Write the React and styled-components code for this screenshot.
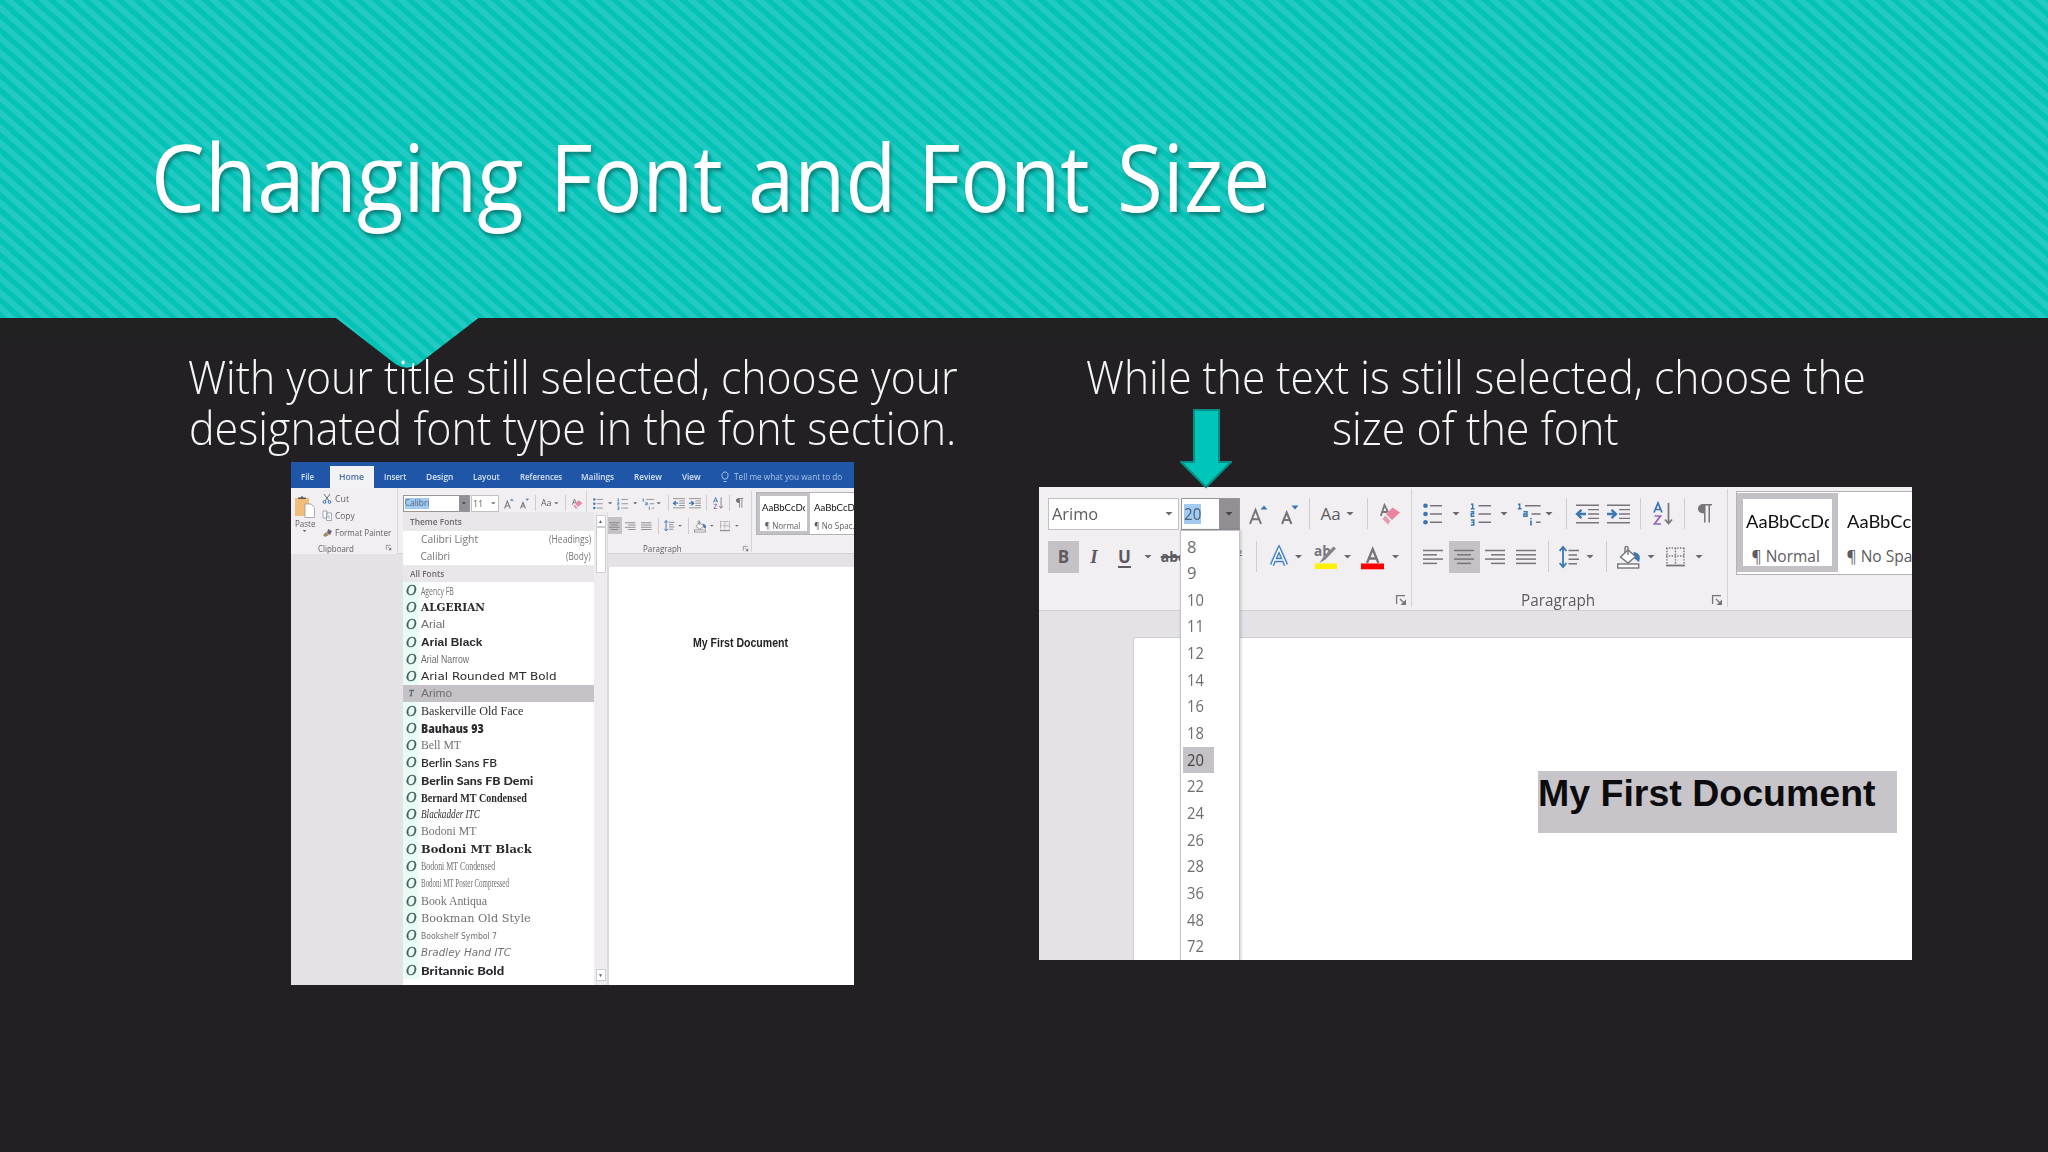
import React, { useLayoutEffect, useRef, useState } from "react";
import styled, { createGlobalStyle, css } from "styled-components";

const GlobalStyle = createGlobalStyle`
  body {
    margin: 0;
    background: #222023;
    font-family: "Open Sans", "Noto Sans", sans-serif;
  }
  * {
    box-sizing: border-box;
  }
`;

const Slide = styled.div`
  position: relative;
  display: flex;
  flex-direction: column;
  width: 2048px;
  height: 1152px;
  overflow: hidden;
  background: linear-gradient(#212221 318px, #222023 350px);
`;

const Banner = styled.header`
  position: relative;
  height: 318px;
  padding: 106px 0 0 150.5px;
`;

const BannerArt = styled.svg`
  position: absolute;
  top: 0;
  left: 0;
`;

const Title = styled.h1`
  position: relative;
  display: flex;
  margin: 0;
  font-size: 94px;
  font-weight: 400;
  line-height: 140px;
  color: #fff;
  text-shadow: 2px 3px 4px rgba(0, 60, 60, 0.5);
`;

const Word = styled.span`
  display: flex;
  margin-right: ${(p) => p.$gap || 0}px;
`;

const Columns = styled.main`
  position: relative;
  display: flex;
  align-items: flex-start;
  padding-left: 291px;
`;

const Column = styled.section`
  display: flex;
  flex-direction: column;
  align-items: center;
  width: ${(p) => p.$w}px;
  margin-right: ${(p) => p.$mr || 0}px;
`;

const Caption = styled.div`
  display: flex;
  flex-direction: column;
  align-items: center;
  height: ${(p) => p.$h}px;
  padding-top: 33px;
  font-size: 45.5px;
  font-weight: 300;
  line-height: 51.3px;
  color: #f6f6f6;
`;

const Shot = styled.div`
  position: relative;
  display: flex;
  flex-direction: column;
  width: 100%;
  height: ${(p) => p.$h}px;
  overflow: hidden;
  background: #e4e2e6;
  filter: ${(p) => (p.$soft ? "blur(0.45px)" : "none")};
`;

const FitBox = styled.span`
  display: inline-block;
  flex: none;
  width: ${(p) => p.$w}px;
  white-space: nowrap;
  text-align: left;
`;

const FitInner = styled.span`
  display: inline-block;
  transform-origin: 0 50%;
`;

// stretches or squeezes a line of text to a fixed width
const Fit = ({ w, children }) => {
  const ref = useRef(null);
  const [scale, setScale] = useState(1);

  useLayoutEffect(() => {
    setScale(w / ref.current.offsetWidth);
  }, [w]);

  return (
    <FitBox $w={w}>
      <FitInner ref={ref} style={{ transform: `scaleX(${scale})` }}>
        {children}
      </FitInner>
    </FitBox>
  );
};

/* ---------- ribbon ---------- */

const RibbonBar = styled.div`
  display: flex;
  flex: none;
  height: 124px;
  background: #f1eff2;
  border-bottom: 1.5px solid #d2d0d4;
  color: #5d5b5f;
  font-size: 16px;
`;

const Zoomed = styled.div`
  zoom: 0.522;
  padding-top: ${(p) => p.$pt || 0}px;
`;

const Group = styled.div`
  position: relative;
  flex: none;
  width: ${(p) => p.$w}px;
  height: 118px;
  margin-top: 2px;
  border-right: 1.5px solid #d4d2d6;
`;

const ToolRow = styled.div`
  display: flex;
  align-items: center;
  height: 32px;
  margin-top: ${(p) => p.$mt}px;
`;

const Icon = styled.svg`
  flex: none;
  overflow: visible;
  margin-left: ${(p) => p.$ml || 0}px;
`;

const Rule = styled.i`
  flex: none;
  width: 1px;
  height: 31px;
  margin-left: ${(p) => p.$ml}px;
  background: #cfcdd1;
`;

const Caret = styled.i`
  flex: none;
  width: 8px;
  height: 4px;
  margin-left: ${(p) => p.$ml || 0}px;
  background: ${(p) => p.$color || "#6a686c"};
  clip-path: polygon(0 0, 100% 0, 50% 100%);
`;

const Combo = styled.div`
  display: flex;
  align-items: center;
  justify-content: space-between;
  width: ${(p) => p.$w}px;
  height: 32px;
  margin-left: ${(p) => p.$ml || 0}px;
  padding-left: 3px;
  padding-right: ${(p) => (p.$open ? 0 : 5)}px;
  background: #fff;
  border: 1.5px solid ${(p) => (p.$open ? "#98969a" : "#c2c0c4")};
`;

const ComboButton = styled.span`
  display: flex;
  align-items: center;
  justify-content: center;
  width: 20px;
  height: 100%;
  background: #929094;
`;

const Picked = styled.span`
  margin-left: -1px;
  line-height: 20px;
  background: #a3cbf2;
  color: #49617c;
`;

const Letter = styled.span`
  display: flex;
  flex: none;
  align-items: center;
  justify-content: center;
  width: ${(p) => p.$w}px;
  height: 32px;
  margin-left: ${(p) => p.$ml || 0}px;
  font-weight: ${(p) => (p.$bold ? 700 : 400)};
  font-style: ${(p) => (p.$italic ? "italic" : "normal")};
  font-family: ${(p) => (p.$italic ? '"Liberation Serif", serif' : "inherit")};
  font-size: ${(p) => p.$size || 17}px;
  background: ${(p) => (p.$on ? "#c4c2c6" : "none")};
  ${(p) =>
    p.$line &&
    css`
      text-decoration: ${p.$line};
      text-underline-offset: 3px;
      text-decoration-thickness: 1.5px;
    `}
`;

const GroupFoot = styled.div`
  display: flex;
  align-items: center;
  justify-content: flex-end;
  height: 22px;
  margin-top: 16px;
  padding-right: 5px;
  font-size: 15.5px;
`;

const FootLabel = styled.span`
  display: flex;
  margin-right: 117px;
`;

const Gallery = styled.div`
  display: flex;
  flex: none;
  height: 84px;
  width: 320px;
  margin: 4px 0 0 8px;
  background: #fff;
  border: 1.5px solid #b5b3b7;
  border-right: 0;
`;

const Style = styled.div`
  display: flex;
  flex: none;
  flex-direction: column;
  width: 101px;
  height: 79px;
  margin-top: 1px;
  padding: 7px 0 0 3px;
  border: 6px solid ${(p) => (p.$on ? "#c3c1c5" : "transparent")};
`;

const StyleSample = styled.span`
  display: block;
  flex: none;
  width: 83px;
  height: 32px;
  overflow: hidden;
  white-space: nowrap;
  color: #111;
  font-size: 16.5px;
  line-height: 32px;
  font-family: Lato, "Open Sans", sans-serif;
`;

const StyleName = styled.span`
  display: block;
  flex: none;
  height: 28px;
  padding-left: ${(p) => p.$pl || 0}px;
  white-space: nowrap;
  font-size: 15.5px;
  line-height: 36px;
`;

const grey = "#77757a";
const blue = "#3a76b4";

const Lines = ({ rows, ml, w = 20 }) => (
  <Icon $ml={ml} width={w} height="16" stroke={grey} strokeWidth="1.5">
    {rows.map(([a, b], i) => (
      <path key={i} d={`M${a} ${1.5 + i * 4.3}H${b}`} />
    ))}
  </Icon>
);

const BulletsIcon = ({ ml }) => (
  <Icon $ml={ml} width="19" height="22" fill={blue}>
    <circle cx="2.5" cy="2.7" r="2.3" />
    <circle cx="2.5" cy="11" r="2.3" />
    <circle cx="2.5" cy="19.3" r="2.3" />
    <path d="M7 2.7H19M7 11H19M7 19.3H19" stroke={grey} strokeWidth="1.4" />
  </Icon>
);

const NumberingIcon = ({ ml }) => (
  <Icon $ml={ml} width="21" height="22" fill="none" stroke={blue} strokeWidth="1.4">
    <path d="M1 1.3H2.7V5.5M.8 5.7H4.6" />
    <path d="M.8 8.8H3.6V10.7H1.2V13.3H4.4" />
    <path d="M.8 17H3.8V22H.8M1.4 19.4H3.8" />
    <path d="M8.5 2.7H21M8.5 11H21M8.5 19.3H21" stroke={grey} />
  </Icon>
);

const MultilevelIcon = ({ ml }) => (
  <Icon $ml={ml} width="24" height="22" fill="none" stroke={blue} strokeWidth="1.4">
    <path d="M1 1.3H2.7V5.5M.8 5.7H4.6" />
    <path d="M6.5 8.8H10V13.3H6.8V11H10" />
    <path d="M14 17.5V22.5M14 15V16.2" strokeWidth="1.6" />
    <path d="M8 2.7H23.5M14.5 11H23.5M19 19.3H23.5" stroke={grey} />
  </Icon>
);

const IndentIcon = ({ ml, right }) => (
  <Icon $ml={ml} width="23" height="20" fill="none" stroke={grey} strokeWidth="1.4">
    <path d="M0 1.2H23M12 5.6H23M12 10H23M12 14.4H23M0 18.8H23" />
    <path
      d={right ? "M0 10H8.5M4.5 5.8L9 10L4.5 14.2" : "M1 10H10M5.5 5.8L1 10L5.5 14.2"}
      stroke={blue}
      strokeWidth="2.3"
    />
  </Icon>
);

const SortIcon = ({ ml }) => (
  <Icon $ml={ml} width="20" height="24" fill="none">
    <path d="M1 10.5L5 1L9 10.5M2.3 7.5H7.7" stroke={blue} strokeWidth="1.7" />
    <path d="M1.5 14H7.5L1.5 22H8" stroke="#9567b8" strokeWidth="1.7" />
    <path d="M15.5 1V21M12 17.5L15.5 21.5L19 17.5" stroke={grey} strokeWidth="1.7" />
  </Icon>
);

const PilcrowIcon = ({ ml }) => (
  <Icon $ml={ml} width="14" height="19" fill={grey}>
    <path d="M14 0H6C2 0 0 2 0 4.8C0 7.5 2 9.5 6 9.5V18.5H7.5V1.5H10.5V18.5H12V1.5H14Z" />
  </Icon>
);

const EraserIcon = ({ ml }) => (
  <Icon $ml={ml} width="20" height="22">
    <path d="M.8 13L4.5 2L8 9M2 9H7" fill="none" stroke={grey} strokeWidth="1.8" />
    <path d="M12.5 4.5L20 9.5L12 17L6 11Z" fill="#e8859f" />
    <path d="M5 12.5L10.5 18L8 21.5L2.5 16Z" fill="#e79bb0" />
  </Icon>
);

const ResizeIcon = ({ ml, down }) => (
  <Icon $ml={ml} width="18" height="20" fill="none">
    <path
      d={down ? "M1 20L5.7 8.5L10.4 20M2.7 16H8.8" : "M1 20L6.5 6L12 20M3 15.3H10"}
      stroke={grey}
      strokeWidth="2"
    />
    <path d={down ? "M10.5 1.5H17.5L14 5.5Z" : "M11.5 5.5H18.5L15 1.5Z"} fill={blue} />
  </Icon>
);

const EffectsIcon = ({ ml }) => (
  <Icon $ml={ml} width="18" height="20" fill="none">
    <path d="M2 18L9 2L16 18M5 13H13" stroke="#a5c8ec" strokeWidth="5.5" strokeLinejoin="round" />
    <path d="M2 18L9 2L16 18M5 13H13" stroke="#3d78b8" strokeWidth="3.8" />
    <path d="M2 18L9 2L16 18M5 13H13" stroke="#fff" strokeWidth="1.6" />
  </Icon>
);

const HighlightIcon = ({ ml }) => (
  <Icon $ml={ml} width="23" height="26">
    <text x="0" y="12" fontSize="13.5" fontWeight="700" fill={grey}>
      ab
    </text>
    <path d="M22 4.5L11.5 15.5L5.5 19L9.5 12.5L19.5 2.5Z" fill="#858388" />
    <rect x="1" y="19.5" width="22" height="5.5" fill="#fff200" />
  </Icon>
);

const FontColorIcon = ({ ml }) => (
  <Icon $ml={ml} width="23" height="26" fill="none">
    <path d="M6 19L11.7 5L17.4 19M8 14.5H15.5" stroke={grey} strokeWidth="2.3" />
    <rect y="19.5" width="23" height="5.8" fill="#fe0000" />
  </Icon>
);

const SpacingIcon = ({ ml }) => (
  <Icon $ml={ml} width="20" height="22" fill="none">
    <path d="M4 1V21M.6 5L4 1L7.4 5M.6 17L4 21L7.4 17" stroke={blue} strokeWidth="1.8" />
    <path d="M9.5 4.5H20M9.5 9H18M9.5 13.3H20M9.5 17.7H18" stroke={grey} strokeWidth="1.5" />
  </Icon>
);

const BucketIcon = ({ ml }) => (
  <Icon $ml={ml} width="23" height="24" fill="none" stroke={grey} strokeWidth="1.4">
    <path d="M16.5 7C21.5 7.5 24.5 11 22 17C20 16 18.5 14 17 13Z" fill={blue} stroke="none" />
    <path d="M3.5 12L11 5L18.5 11.5L11 18Z" fill="#fff" />
    <path d="M8 8V3C8 .8 11 .8 11 3V10" />
    <rect x=".7" y="19" width="21" height="4" fill="#fff" />
  </Icon>
);

const BordersIcon = ({ ml }) => (
  <Icon $ml={ml} width="19" height="20" fill="none" stroke={grey} strokeWidth="1.4">
    <path d="M0 1H19M1 1V17M9.5 1V17M18 1V17M0 9H19" strokeDasharray="1.4 1.4" />
    <path d="M0 18.5H19" strokeWidth="1.8" />
  </Icon>
);

const Launcher = () => (
  <Icon width="10" height="10" fill="none" stroke={grey} strokeWidth="1.3">
    <path d="M.6 9V.6H9M4 4L8 8" />
    <path d="M10 4.5V10H4.5Z" fill={grey} stroke="none" />
  </Icon>
);

const FontGroup = ({ w, nameW, sizeW, name, size, pickName }) => (
  <Group $w={w}>
    <ToolRow $mt={8.5}>
      <Combo $w={nameW} $ml={9} $open={pickName}>
        {pickName ? <Picked>{name}</Picked> : <Fit w={46}>{name}</Fit>}
        {pickName ? (
          <ComboButton>
            <Caret $color="#454347" />
          </ComboButton>
        ) : (
          <Caret />
        )}
      </Combo>
      <Combo $w={sizeW} $ml={1.5} $open={!pickName}>
        {pickName ? (
          size
        ) : (
          <Picked>
            <Fit w={17}>{size}</Fit>
          </Picked>
        )}
        {pickName ? (
          <Caret />
        ) : (
          <ComboButton>
            <Caret $color="#454347" />
          </ComboButton>
        )}
      </Combo>
      <ResizeIcon ml={9} />
      <ResizeIcon ml={14} down />
      <Rule $ml={9.5} />
      <Letter $w={22} $ml={10} $size={17}>
        Aa
      </Letter>
      <Caret $ml={4.5} />
      <Rule $ml={12.5} />
      <EraserIcon ml={12} />
    </ToolRow>
    <ToolRow $mt={11}>
      <Letter $w={31} $ml={9} $on $bold>
        B
      </Letter>
      <Letter $w={30} $italic $bold $size={19}>
        I
      </Letter>
      <Letter $w={31} $bold $line="underline">
        U
      </Letter>
      <Caret $ml={4} />
      <Letter $w={30} $ml={6} $size={14} $line="line-through" $bold>
        abc
      </Letter>
      <Letter $w={16} $ml={40} $size={14}>
        x²
      </Letter>
      <Rule $ml={12} />
      <EffectsIcon ml={12.5} />
      <Caret $ml={7} />
      <HighlightIcon ml={11} />
      <Caret $ml={7} />
      <FontColorIcon ml={9.5} />
      <Caret $ml={7.5} />
    </ToolRow>
    <GroupFoot>
      <Launcher />
    </GroupFoot>
  </Group>
);

const ParagraphGroup = () => (
  <Group $w={316}>
    <ToolRow $mt={8.5}>
      <BulletsIcon ml={11.5} />
      <Caret $ml={10} />
      <NumberingIcon ml={10} />
      <Caret $ml={9} />
      <MultilevelIcon ml={9} />
      <Caret $ml={4} />
      <Rule $ml={13} />
      <IndentIcon ml={9} />
      <IndentIcon ml={8} right />
      <Rule $ml={10} />
      <SortIcon ml={11.5} />
      <Rule $ml={11} />
      <PilcrowIcon ml={13.5} />
    </ToolRow>
    <ToolRow $mt={11}>
      <Lines ml={11.5} rows={[[0, 20], [0, 14], [0, 20], [0, 14]]} />
      <Letter $w={31} $ml={5.5} $on>
        <Lines rows={[[0, 20], [3, 17], [0, 20], [3, 17]]} />
      </Letter>
      <Lines ml={5} rows={[[0, 20], [6, 20], [0, 20], [6, 20]]} />
      <Lines ml={11} rows={[[0, 20], [0, 20], [0, 20], [0, 20]]} />
      <Rule $ml={12} />
      <SpacingIcon ml={10.5} />
      <Caret $ml={7} />
      <Rule $ml={12} />
      <BucketIcon ml={10} />
      <Caret $ml={7} />
      <BordersIcon ml={11} />
      <Caret $ml={10} />
    </ToolRow>
    <GroupFoot>
      <FootLabel>
        <Fit w={74}>Paragraph</Fit>
      </FootLabel>
      <Launcher />
    </GroupFoot>
  </Group>
);

const StyleGallery = ({ second }) => (
  <Gallery>
    <Style $on>
      <StyleSample>
        <Fit w={88}>AaBbCcDd</Fit>
      </StyleSample>
      <StyleName $pl={6}>
        <Fit w={68}>¶ Normal</Fit>
      </StyleName>
    </Style>
    <Style>
      <StyleSample>
        <Fit w={88}>AaBbCcDd</Fit>
      </StyleSample>
      <StyleName>{second}</StyleName>
    </Style>
  </Gallery>
);

/* ---------- left picture ---------- */

const Tabs = styled.nav`
  display: flex;
  flex: none;
  height: 26px;
  background: #2056a8;
  color: #d5e2f5;
  font-size: 9px;
  line-height: 30px;
`;

const Tab = styled.span`
  display: flex;
  align-items: center;
  height: ${(p) => (p.$on ? 22 : 26)}px;
  margin-top: ${(p) => (p.$on ? 4 : 0)}px;
  margin-left: ${(p) => p.$ml}px;
  padding: ${(p) => (p.$on ? "0 10px 0 9px" : "4px 0 0")};
  background: ${(p) => (p.$on ? "#f3f2f5" : "none")};
  color: ${(p) => (p.$on ? "#4a6ea8" : "inherit")};
  font-weight: 600;
`;

const Hint = styled(Tab)`
  gap: 5px;
  font-weight: 400;
  color: #a9c3ea;
`;

const LeftRibbon = styled.div`
  display: flex;
  flex: none;
  height: 66px;
  background: #f1eff2;
`;

const Clipboard = styled.div`
  display: grid;
  grid-template-columns: 27px 1fr;
  grid-template-rows: 55px 11px;
  flex: none;
  width: 107px;
  height: 66px;
  border-right: 1px solid #d9d7db;
  font-size: 8.8px;
  color: #626064;
`;

const Paste = styled.div`
  display: flex;
  flex-direction: column;
  align-items: center;
  padding-top: 7px;
  line-height: 12px;
`;

const SmallCaret = styled(Caret)`
  width: 4px;
  height: 2px;
`;

const ClipList = styled.div`
  display: flex;
  flex-direction: column;
  padding: 2px 0 0 4px;
`;

const ClipItem = styled.div`
  display: flex;
  align-items: center;
  gap: 3px;
  height: 17px;
`;

const ClipFoot = styled.div`
  display: flex;
  grid-column: 1 / 3;
  align-items: center;
  justify-content: space-between;
  padding: 0 6px 0 27px;
`;

const LeftDesk = styled.div`
  flex: 1;
  padding: 13px 0 0 317px;
`;

const LeftPage = styled.div`
  height: 100%;
  padding: 66px 0 0 84px;
  background: #fff;
  border-left: 1px solid #dad8dc;
  font: bold 12px/20px "Liberation Sans", sans-serif;
  color: #222;
`;

const FontMenu = styled.div`
  position: absolute;
  top: 50px;
  left: 112px;
  display: flex;
  width: 205px;
  height: 473px;
  background: #fff;
`;

const FontRows = styled.div`
  display: flex;
  flex: 1;
  flex-direction: column;
`;

const MenuHead = styled.div`
  flex: none;
  height: ${(p) => p.$h}px;
  padding-left: 7px;
  background: #e9e7ea;
  color: #6b696d;
  font-size: 8.5px;
  font-weight: 600;
  line-height: ${(p) => p.$h}px;
`;

const ThemeRow = styled.div`
  display: flex;
  flex: none;
  justify-content: space-between;
  height: 16.8px;
  padding: 0 3px 0 17.5px;
  color: #757378;
  font-size: 10px;
  line-height: 17px;
`;

const FontRow = styled.div`
  display: flex;
  flex: none;
  align-items: center;
  height: 17.28px;
  line-height: 17px;
  white-space: nowrap;
  background: ${(p) =>
    p.$on ? "#c4c2c6" : "linear-gradient(90deg, #e9fbf5 14px, #fff 18px)"};
  color: ${(p) => (p.$dark ? "#2c2a2e" : "#716f73")};
`;

const Mark = styled.span`
  width: 17.5px;
  padding-left: ${(p) => (p.$tt ? 6 : 3)}px;
  font: italic ${(p) => (p.$tt ? 8 : 14.5)}px/17px "Liberation Serif", serif;
  -webkit-text-stroke: 0.3px #3f5f5c;
  color: #3f5f5c;
`;

const Face = styled.span`
  display: flex;
  font-family: ${(p) => p.$face};
  font-size: ${(p) => p.$size || 11.5}px;
  font-weight: ${(p) => p.$weight || 400};
  font-style: ${(p) => (p.$italic ? "italic" : "normal")};
`;

const Scroll = styled.div`
  display: flex;
  flex: none;
  flex-direction: column;
  align-items: center;
  justify-content: space-between;
  width: 14px;
  padding: 3px 0 4px;
  background: #eeecef;
  border-right: 1px solid #dcdadd;
`;

const ScrollKey = styled.div`
  display: flex;
  align-items: center;
  justify-content: center;
  width: 10px;
  height: 12px;
  background: #fff;
  border: 1px solid #cfcdd1;
  color: #5d5b5f;
  font-size: 5px;
`;

const Thumb = styled.div`
  width: 10px;
  height: 46px;
  background: #fff;
  border: 1px solid #cfcdd1;
`;

const sans = '"Liberation Sans", sans-serif';
const serif = '"Liberation Serif", serif';
const open = '"Open Sans", sans-serif';
const dejavu = '"DejaVu Sans", sans-serif';
const dejavuSerif = '"DejaVu Serif", serif';

const fonts = [
  { name: "Agency FB", w: 33, face: open },
  { name: "ALGERIAN", w: 64, face: dejavuSerif, weight: 700, dark: true },
  { name: "Arial", w: 24, face: sans },
  { name: "Arial Black", w: 61, face: sans, weight: 900, dark: true },
  { name: "Arial Narrow", w: 48, face: sans },
  { name: "Arial Rounded MT Bold", w: 135, face: dejavu, size: 11, dark: true },
  { name: "Arimo", w: 31, face: sans, on: true },
  { name: "Baskerville Old Face", w: 102, face: serif, size: 12, dark: true },
  { name: "Bauhaus 93", w: 63, face: open, weight: 800, dark: true },
  { name: "Bell MT", w: 40, face: serif, size: 12 },
  { name: "Berlin Sans FB", w: 76, face: "Lato, sans-serif", weight: 600, dark: true },
  { name: "Berlin Sans FB Demi", w: 112, face: "Lato, sans-serif", weight: 900, dark: true },
  { name: "Bernard MT Condensed", w: 106, face: serif, weight: 700, size: 13.5, dark: true },
  { name: "Blackadder ITC", w: 59, face: serif, italic: true, dark: true },
  { name: "Bodoni MT", w: 55, face: serif, size: 12 },
  { name: "Bodoni MT Black", w: 111, face: dejavuSerif, weight: 700, dark: true },
  { name: "Bodoni MT Condensed", w: 74, face: serif, size: 12.5 },
  { name: "Bodoni MT Poster Compressed", w: 88, face: serif, size: 12.5 },
  { name: "Book Antiqua", w: 66, face: serif, size: 12 },
  { name: "Bookman Old Style", w: 110, face: dejavuSerif },
  { name: "Bookshelf Symbol 7", w: 76, face: dejavu, size: 9.5 },
  { name: "Bradley Hand ITC", w: 90, face: dejavu, size: 10, italic: true },
  { name: "Britannic Bold", w: 83, face: "Lato, sans-serif", weight: 900, dark: true },
];

const FontPicture = () => (
  <Shot $h={523} $soft>
    <Tabs>
      <Tab $ml={10}>
        <Fit w={13}>File</Fit>
      </Tab>
      <Tab $ml={16} $on>
        <Fit w={25}>Home</Fit>
      </Tab>
      <Tab $ml={10}>
        <Fit w={22}>Insert</Fit>
      </Tab>
      <Tab $ml={19.5}>
        <Fit w={27}>Design</Fit>
      </Tab>
      <Tab $ml={20}>
        <Fit w={27}>Layout</Fit>
      </Tab>
      <Tab $ml={20}>
        <Fit w={42}>References</Fit>
      </Tab>
      <Tab $ml={19.5}>
        <Fit w={33}>Mailings</Fit>
      </Tab>
      <Tab $ml={20}>
        <Fit w={28}>Review</Fit>
      </Tab>
      <Tab $ml={20}>
        <Fit w={19}>View</Fit>
      </Tab>
      <Hint $ml={20}>
        <Icon width="8" height="12" fill="none" stroke="#a9c3ea">
          <path d="M2.5 8C0 5.5 .5 1 4 1S8 5.5 5.5 8ZM2.5 10.5H5.5" />
        </Icon>
        <Fit w={108}>Tell me what you want to do</Fit>
      </Hint>
    </Tabs>
    <LeftRibbon>
      <Clipboard>
        <Paste>
          <Icon width="21" height="23">
            <rect x="1" y="3" width="14" height="18" fill="#f1be79" />
            <path d="M4 4V2.5H6.5Q8 0 9.5 2.5H12V4Z" fill="#5b595c" />
            <path d="M11 9H17L20.5 12.5V22.5H11Z" fill="#fff" stroke="#98969a" strokeWidth=".8" />
          </Icon>
          <Fit w={20}>Paste</Fit>
          <SmallCaret />
        </Paste>
        <ClipList>
          <ClipItem>
            <Icon width="10" height="11" fill="none" stroke="#66707a">
              <path d="M2 1L7 8M8 1L3 8" />
              <circle cx="2.5" cy="9" r="1.4" stroke={blue} />
              <circle cx="7.5" cy="9" r="1.4" stroke={blue} />
            </Icon>
            <Fit w={14}>Cut</Fit>
          </ClipItem>
          <ClipItem>
            <Icon width="10" height="11" fill="#fff" stroke="#8a959f" strokeWidth=".8">
              <path d="M1 1H5V8H1ZM4.5 3H9.5V10.5H4.5ZM6 6H8M6 8H8" />
            </Icon>
            <Fit w={20}>Copy</Fit>
          </ClipItem>
          <ClipItem>
            <Icon width="10" height="10" fill="#6b696d">
              <path d="M6 1L10 3L8 7L5 5Z" />
              <path d="M4 4L7 7L3 9L1 7Z" fill="#a08b6a" />
            </Icon>
            <Fit w={56}>Format Painter</Fit>
          </ClipItem>
        </ClipList>
        <ClipFoot>
          <Fit w={36}>Clipboard</Fit>
          <Zoomed>
            <Launcher />
          </Zoomed>
        </ClipFoot>
      </Clipboard>
      <Zoomed $pt={3}>
        <RibbonBar>
          <FontGroup w={362} nameW={129} sizeW={54} name="Calibri" size="11" pickName />
          <ParagraphGroup />
          <StyleGallery second="¶ No Spac..." />
        </RibbonBar>
      </Zoomed>
    </LeftRibbon>
    <LeftDesk>
      <LeftPage>
        <Fit w={95}>My First Document</Fit>
      </LeftPage>
    </LeftDesk>
    <FontMenu>
      <FontRows>
        <MenuHead $h={19}>
          <Fit w={52}>Theme Fonts</Fit>
        </MenuHead>
        <ThemeRow>
          <Fit w={57}>Calibri Light</Fit>
          <Fit w={42}>(Headings)</Fit>
        </ThemeRow>
        <ThemeRow>
          <Fit w={30}>Calibri</Fit>
          <Fit w={25}>(Body)</Fit>
        </ThemeRow>
        <MenuHead $h={17}>
          <Fit w={34}>All Fonts</Fit>
        </MenuHead>
        {fonts.map((f) => (
          <FontRow key={f.name} $on={f.on} $dark={f.dark}>
            <Mark $tt={f.on}>{f.on ? "T" : "O"}</Mark>
            <Face $face={f.face} $size={f.size} $weight={f.weight} $italic={f.italic}>
              <Fit w={f.w}>{f.name}</Fit>
            </Face>
          </FontRow>
        ))}
      </FontRows>
      <Scroll>
        <div>
          <ScrollKey>▲</ScrollKey>
          <Thumb />
        </div>
        <ScrollKey>▼</ScrollKey>
      </Scroll>
    </FontMenu>
  </Shot>
);

/* ---------- right picture ---------- */

const RightDesk = styled.div`
  flex: 1;
  padding: 26px 0 0 94px;
`;

const RightPage = styled.div`
  height: 100%;
  padding: 133px 0 0 404px;
  background: #fff;
  border: 1.5px solid #cfcdd1;
  border-width: 1.5px 0 0 1.5px;
`;

const Heading = styled.div`
  width: 359px;
  height: 62px;
  background: #c7c5c9;
  color: #0c0b0d;
  font: bold 37.5px/44px "Liberation Sans", sans-serif;
`;

const SizeMenu = styled.div`
  position: absolute;
  top: 43px;
  left: 141px;
  width: 60px;
  height: 440px;
  padding: 2.5px 0 0 2px;
  background: #fff;
  border: 1.5px solid #c4c2c6;
  box-shadow: 1px 0 3px rgba(0, 0, 0, 0.2);
`;

const SizeItem = styled.div`
  width: 31px;
  height: 26.67px;
  padding-left: 4px;
  background: ${(p) => (p.$on ? "#c4c2c6" : "none")};
  color: ${(p) => (p.$on ? "#444246" : "#6f6d71")};
  font-size: 16.5px;
  line-height: 26px;
`;

const Pointer = styled.svg`
  position: absolute;
  left: 1180px;
  top: 91px;
  z-index: 1;
`;

const sizes = [8, 9, 10, 11, 12, 14, 16, 18, 20, 22, 24, 26, 28, 36, 48, 72];

const SizePicture = () => (
  <Shot $h={473}>
    <RibbonBar>
      <FontGroup w={372.5} nameW={131} sizeW={59.5} name="Arimo" size="20" />
      <ParagraphGroup />
      <StyleGallery second="¶ No Spacing" />
    </RibbonBar>
    <RightDesk>
      <RightPage>
        <Heading>
          <Fit w={338}>My First Document</Fit>
        </Heading>
      </RightPage>
    </RightDesk>
    <SizeMenu>
      {sizes.map((s) => (
        <SizeItem key={s} $on={s === 20}>
          <Fit w={s < 10 ? 9 : 17}>{s}</Fit>
        </SizeItem>
      ))}
    </SizeMenu>
  </Shot>
);

const App = () => {
  return (
    <Slide>
      <GlobalStyle />
      <Banner>
        <BannerArt width="2048" height="370">
          <defs>
            <pattern id="stripes" width="17.07" height="15" patternUnits="userSpaceOnUse">
              <rect width="17.07" height="15" fill="#23cac3" />
              <path
                d="M-17.07 -15L34.14 30M0 -15L34.14 15M-17.07 0L17.07 30"
                stroke="#02c3b5"
                strokeWidth="5.4"
              />
            </pattern>
          </defs>
          <path
            d="M0 0H2048V318H478.5L418 364.5Q407 371 396 364.5L336 318H0Z"
            fill="url(#stripes)"
          />
        </BannerArt>
        <Title>
          <Word $gap={26.5}>
            <Fit w={372.5}>Changing</Fit>
          </Word>
          <Word $gap={26}>
            <Fit w={172.5}>Font</Fit>
          </Word>
          <Word $gap={22}>
            <Fit w={148}>and</Fit>
          </Word>
          <Word $gap={27}>
            <Fit w={171.5}>Font</Fit>
          </Word>
          <Word>
            <Fit w={153}>Size</Fit>
          </Word>
        </Title>
      </Banner>
      <Columns>
        <Column $w={563} $mr={185}>
          <Caption $h={144}>
            <Fit w={770}>With your title still selected, choose your</Fit>
            <Fit w={767}>designated font type in the font section.</Fit>
          </Caption>
          <FontPicture />
        </Column>
        <Column $w={873}>
          <Caption $h={169}>
            <Fit w={780}>While the text is still selected, choose the</Fit>
            <Fit w={287}>size of the font</Fit>
          </Caption>
          <SizePicture />
        </Column>
        <Pointer width="52" height="80">
          <path
            d="M14 1H39V53H51L26 78L1 53H14Z"
            fill="#00c6b9"
            stroke="#078d85"
            strokeWidth="2"
          />
        </Pointer>
      </Columns>
    </Slide>
  );
};

export default App;
